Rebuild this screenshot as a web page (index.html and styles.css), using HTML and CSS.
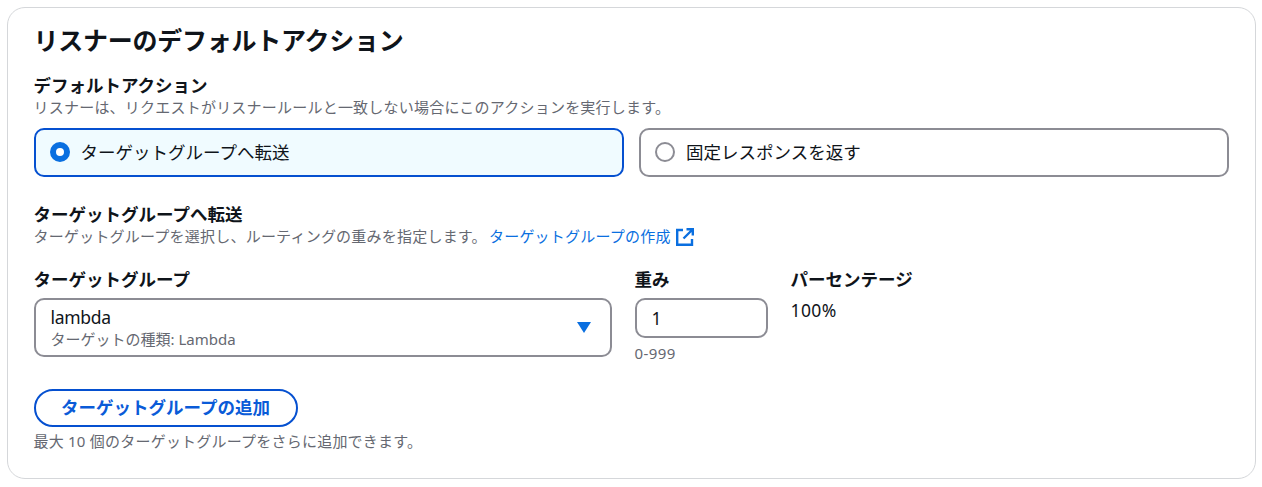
FILE: index.html
```html
<!DOCTYPE html>
<html lang="ja">
<head>
<meta charset="utf-8">
<title>リスナーのデフォルトアクション</title>
<link rel="stylesheet" href="styles.css">
</head>
<body>
<section class="card">
  <h2 class="title">リスナーのデフォルトアクション</h2>
  <div class="label">デフォルトアクション</div>
  <div class="hint">リスナーは、リクエストがリスナールールと一致しない場合にこのアクションを実行します。</div>
  <div class="tiles">
    <div class="tile tile-on"><span class="radio radio-on"></span><span class="tile-text">ターゲットグループへ転送</span></div>
    <div class="tile"><span class="radio"></span><span class="tile-text">固定レスポンスを返す</span></div>
  </div>
  <div class="label forward">ターゲットグループへ転送</div>
  <div class="hint">ターゲットグループを選択し、ルーティングの重みを指定します。 <a class="link">ターゲットグループの作成<svg class="ext" viewBox="0 0 18 18" width="18" height="18"><path d="M7 2H1.2v14.8H16V11" fill="none" stroke="#0a6fe0" stroke-width="2.4"/><path d="M10.5 1.2h6.3v6.3M16 2 7.5 10.5" fill="none" stroke="#0a6fe0" stroke-width="2.4"/></svg></a></div>
  <div class="fields">
    <div class="col-group">
      <div class="label">ターゲットグループ</div>
      <div class="select">
        <div class="select-text">
          <div class="select-main">lambda</div>
          <div class="select-sub">ターゲットの種類: Lambda</div>
        </div>
        <svg class="caret" viewBox="0 0 14 11" width="14" height="11"><path d="M0 0h14L7 11z" fill="#0a6fe0"/></svg>
      </div>
    </div>
    <div class="col-weight">
      <div class="label">重み</div>
      <div class="input">1</div>
      <div class="range">0-999</div>
    </div>
    <div class="col-pct">
      <div class="label">パーセンテージ</div>
      <div class="pct">100%</div>
    </div>
  </div>
  <button class="add" type="button">ターゲットグループの追加</button>
  <div class="hint limit">最大 10 個のターゲットグループをさらに追加できます。</div>
</section>
</body>
</html>
```
FILE: styles.css
```css
html, body { margin: 0; padding: 0; background: #fff; }
body {
  padding: 7px;
  font-family: "Noto Sans", "Noto Sans CJK JP", sans-serif;
  color: #0f141a;
}
.card {
  box-sizing: border-box;
  width: 1249px;
  height: 472px;
  border: 1.5px solid #d5d7da;
  border-radius: 18px;
  padding: 15px 25.5px 0;
}
.title {
  margin: 0;
  font-size: 25px;
  line-height: 34px;
  font-weight: 700;
  letter-spacing: -0.25px;
}
.label {
  font-size: 17.5px;
  line-height: 24px;
  font-weight: 700;
}
.title + .label { margin-top: 15.5px; }
.hint {
  font-size: 15px;
  line-height: 20px;
  color: #656871;
  letter-spacing: 0.22px;
}
.tiles {
  display: grid;
  grid-template-columns: 590px 590px;
  column-gap: 15.5px;
  margin-top: 11px;
}
.tile {
  box-sizing: border-box;
  height: 49px;
  border: 2px solid #8c8c94;
  border-radius: 10px;
  display: flex;
  align-items: center;
  gap: 11px;
  padding: 0 14px;
  font-size: 17.5px;
}
.tile-text { padding-bottom: 1px; }
.tile-on { border-color: #0550d0; background: #f0fbff; }
.radio {
  box-sizing: border-box;
  width: 20px;
  height: 20px;
  border-radius: 50%;
  border: 2.5px solid #8c8c94;
  flex: none;
}
.radio-on { border: 6.5px solid #0a6fe0; background: #fff; }
.forward { margin-top: 25px; }
.link { color: #0a6fe0; margin-left: -2px; }
.ext { margin-left: 5px; vertical-align: -4px; }
.fields {
  display: grid;
  grid-template-columns: 578px 133px auto;
  column-gap: 23px;
  margin-top: 21px;
}
.select {
  box-sizing: border-box;
  height: 59px;
  margin-top: 7px;
  border: 2px solid #8c8c94;
  border-radius: 10px;
  display: flex;
  align-items: center;
  justify-content: space-between;
  padding: 0 19px 0 15px;
}
.select-text { padding-top: 1px; }
.select-main { font-size: 17.5px; line-height: 22px; letter-spacing: -0.3px; }
.select-sub { font-size: 15px; line-height: 22px; color: #656871; }
.input {
  box-sizing: border-box;
  height: 40px;
  margin-top: 7px;
  border: 2px solid #8c8c94;
  border-radius: 10px;
  font-size: 17.5px;
  line-height: 36px;
  padding-left: 15px;
}
.range { font-size: 15px; line-height: 20px; color: #656871; margin-top: 5px; letter-spacing: 0.4px; }
.pct { font-size: 17.5px; line-height: 24px; margin-top: 7px; letter-spacing: 0.4px; }
.add {
  display: block;
  box-sizing: border-box;
  width: 264px;
  height: 38px;
  margin-top: 26px;
  border: 2px solid #0550d0;
  border-radius: 19px;
  background: #fff;
  color: #0a5bd8;
  font: 700 17.5px/1 "Noto Sans", "Noto Sans CJK JP", sans-serif;
  padding: 0;
}
.limit { margin-top: 4px; }
```
